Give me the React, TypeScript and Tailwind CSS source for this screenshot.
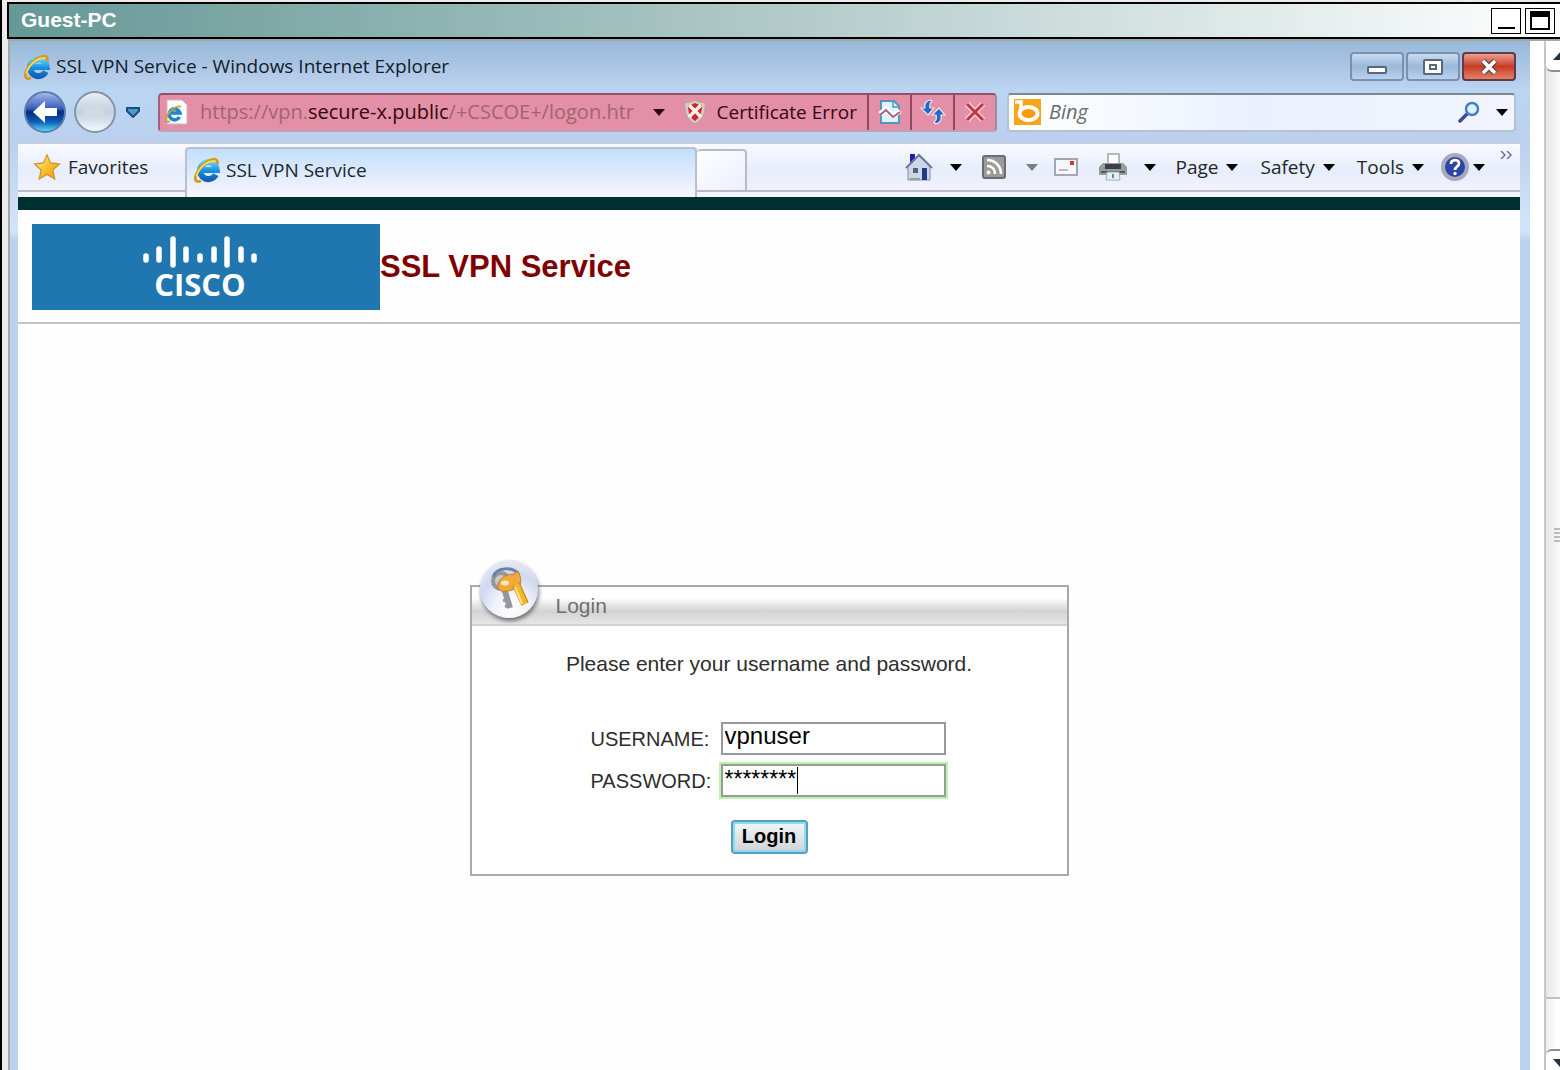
import { useState } from "react";
import type { ReactNode } from "react";

const uiFont = "font-['Open_Sans','Noto_Sans',sans-serif]";
const pageFont = "font-['Liberation_Sans',Arial,sans-serif]";

const IeLogo = ({ className }: { className: string }) => (
  <svg viewBox="0 0 28 28" className={className} aria-hidden="true">
    <defs>
      <linearGradient id="ie-blue" x1="0" y1="0" x2="0" y2="1">
        <stop offset="0" stopColor="#5fd0fb" />
        <stop offset="0.5" stopColor="#1a8fe0" />
        <stop offset="1" stopColor="#1163b4" />
      </linearGradient>
    </defs>
    <path d="M23.5 19a9 9 0 1 1 1-5H9" fill="none" stroke="url(#ie-blue)" strokeWidth="6.500" />
    <path
      d="M25 8c1-4-1-6.500-5-5.500C12 4.500 3 14 1.500 22c-.7 4 2 5.500 6 3.500"
      fill="none"
      stroke="#d79a1c"
      strokeWidth="3"
    />
    <path d="M23 4.500C14 3.500 5 12 2.500 21" fill="none" stroke="#ffe04f" strokeWidth="1.800" />
  </svg>
);

const Caret = ({ className = "text-black" }: { className?: string }) => (
  <svg viewBox="0 0 12 7" className={`h-[7px] w-3 shrink-0 ${className}`} aria-hidden="true">
    <path d="M0 0h12L6 7z" fill="currentColor" />
  </svg>
);

const BackIcon = () => (
  <svg viewBox="0 0 44 44" className="h-11 w-11" aria-hidden="true">
    <defs>
      <linearGradient id="back-fill" x1="0" y1="0" x2="0" y2="1">
        <stop offset="0" stopColor="#a9bcea" />
        <stop offset="0.4" stopColor="#3d62c0" />
        <stop offset="0.5" stopColor="#082a80" />
        <stop offset="0.75" stopColor="#0e60b8" />
        <stop offset="1" stopColor="#5ee4fb" />
      </linearGradient>
    </defs>
    <circle cx="22" cy="22" r="20" fill="url(#back-fill)" stroke="#5f7ca8" strokeWidth="2" />
    <path d="M10 22l12-11v7h12v8H22v7z" fill="#fff" />
  </svg>
);

const ForwardIcon = () => (
  <svg viewBox="0 0 44 44" className="h-11 w-11" aria-hidden="true">
    <defs>
      <linearGradient id="forward-fill" x1="0" y1="0" x2="0" y2="1">
        <stop offset="0" stopColor="#e9eff6" />
        <stop offset="0.5" stopColor="#c3d0de" />
        <stop offset="1" stopColor="#f3f8fc" />
      </linearGradient>
    </defs>
    <circle cx="22" cy="22" r="20" fill="url(#forward-fill)" stroke="#8494a9" strokeWidth="2" />
    <path d="M33 22L22 12v6.500H11v7h11V32z" fill="#d1dbe6" />
  </svg>
);

const PageLogo = () => (
  <svg viewBox="0 0 24 26" className="h-[26px] w-6 shrink-0" aria-hidden="true">
    <path d="M3 1h15l5 5v19H3z" fill="#fbfdfd" stroke="#d9b5ba" />
    <path d="M15.500 18a5.500 5.500 0 1 1 .5-4H6" fill="none" stroke="#1f86cc" strokeWidth="3.500" />
    <path d="M17 8c-4-3-14 6-15 12-.3 3 2 3.500 4 2" fill="none" stroke="#c9a22a" strokeWidth="1.800" />
  </svg>
);

const ShieldError = () => (
  <svg viewBox="0 0 24 26" className="h-[26px] w-6 shrink-0" aria-hidden="true">
    <path d="M2 3c4 1 6 0 10-2 4 2 6 3 10 2 1 10-2 18-10 22C4 21 1 13 2 3z" fill="#d9c9bf" stroke="#b9a39a" />
    <path d="M5 6c3 0 5-1 7-2 2 1 4 2 7 2 0 8-2 12-7 16C7 18 5 14 5 6z" fill="#cf2330" />
    <path d="M6 6l12 12M18 6L6 18" stroke="#fff2e4" strokeWidth="3.500" />
  </svg>
);

const CompatIcon = () => (
  <svg viewBox="0 0 24 26" className="h-[26px] w-6" aria-hidden="true">
    <path d="M3 2h13l5 5v17H3z" fill="#dff4fa" stroke="#5796b8" strokeWidth="2" />
    <path d="M15 2v6h6" fill="none" stroke="#5796b8" strokeWidth="1.500" />
    <path d="M2 15l6-5 7 7 7-5" fill="none" stroke="#fff" strokeWidth="5" />
    <path d="M2 16l6-5 7 7 7-5" fill="none" stroke="#a45c92" strokeWidth="2" />
  </svg>
);

const RefreshIcon = () => (
  <svg viewBox="0 0 26 26" className="h-[26px] w-[26px]" aria-hidden="true">
    <g stroke="#f4dfea" strokeWidth="1.200" fill="#1f6cc8">
      <path d="M10 1C6 2 4 5 5 9H1l7 7 6-7h-4c-1-3 0-5 2-7z" />
      <path d="M16 25c4-1 6-4 5-9h4l-6-7-7 7h4c1 3 1 5-2 7z" />
    </g>
  </svg>
);

const StopIcon = () => (
  <svg viewBox="0 0 24 24" className="h-6 w-6" aria-hidden="true">
    <path d="M4 4l16 16M20 4L4 20" stroke="#f7d5d8" strokeWidth="6" />
    <path d="M4 4l16 16M20 4L4 20" stroke="#c9333d" strokeWidth="3" />
  </svg>
);

const BingIcon = () => (
  <svg viewBox="0 0 27 26" className="h-[26px] w-[27px] shrink-0" aria-hidden="true">
    <rect width="27" height="26" fill="#f9a51a" />
    <path d="M1 3h6v12" fill="none" stroke="#fff" strokeWidth="3.500" />
    <ellipse cx="14.500" cy="14.500" rx="9" ry="6.500" fill="#fb9a07" stroke="#fff" strokeWidth="4" />
  </svg>
);

const SearchIcon = () => (
  <svg viewBox="0 0 22 22" className="h-[22px] w-[22px]" aria-hidden="true">
    <path d="M2 20l8-8" stroke="#3c4a9c" strokeWidth="3.500" strokeLinecap="round" />
    <circle cx="14" cy="8" r="6" fill="#d9f4fd" stroke="#4a7fc0" strokeWidth="2.500" />
  </svg>
);

const StarIcon = () => (
  <svg viewBox="0 0 28 28" className="h-7 w-7 shrink-0" aria-hidden="true">
    <defs>
      <linearGradient id="star-fill" x1="0" y1="0" x2="1" y2="1">
        <stop offset="0" stopColor="#fff7b0" />
        <stop offset="0.5" stopColor="#fbc42c" />
        <stop offset="1" stopColor="#f08c10" />
      </linearGradient>
    </defs>
    <path
      d="M14 2l3.500 8 9 1-6.700 6 2 9L14 21.500 6.200 26l2-9-6.700-6 9-1z"
      fill="url(#star-fill)"
      stroke="#d29334"
      strokeWidth="1.300"
    />
  </svg>
);

const HomeIcon = () => (
  <svg viewBox="0 0 28 28" className="h-7 w-7" aria-hidden="true">
    <path d="M3 13L14 3l11 10v14H3z" fill="#cdd7e8" stroke="#8490ab" />
    <path d="M5 1h5v6l-5 5z" fill="#1d20a8" />
    <path d="M1 15L14 2l13 13" fill="none" stroke="#727a9e" strokeWidth="2" />
    <rect x="8" y="15" width="5" height="5" fill="#56627c" />
    <rect x="17" y="15" width="5" height="12" fill="#1d3a86" />
    <path d="M5 26h10" stroke="#8fa38f" strokeWidth="2" />
  </svg>
);

const FeedIcon = () => (
  <svg viewBox="0 0 24 24" className="h-6 w-6" aria-hidden="true">
    <rect x="1" y="1" width="22" height="22" rx="2" fill="#9b9b9b" stroke="#6c6c6c" strokeWidth="2" />
    <g fill="none" stroke="#fff" strokeWidth="2.500">
      <path d="M5 5c8 0 14 6 14 14" />
      <path d="M5 11c5 0 8 3 8 8" />
    </g>
    <circle cx="6.500" cy="17.500" r="2" fill="#fff" />
  </svg>
);

const MailIcon = () => (
  <svg viewBox="0 0 24 18" className="h-[18px] w-6" aria-hidden="true">
    <rect x="1" y="1" width="22" height="16" fill="#f6f7fa" stroke="#a3a7b0" strokeWidth="2" />
    <rect x="16" y="3" width="4" height="4" fill="#d2353a" />
    <path d="M5 12h9" stroke="#c69c9c" strokeWidth="1.500" />
  </svg>
);

const PrinterIcon = () => (
  <svg viewBox="0 0 28 28" className="h-7 w-7" aria-hidden="true">
    <path d="M9 1h11v10H9z" fill="#fff" stroke="#a4a4a4" strokeWidth="1.500" />
    <path d="M4 10h20l4 4v8H0v-8z" fill="#999c9f" />
    <path d="M6 11h16v5H6z" fill="#3c4045" />
    <path d="M2 19h24" stroke="#55595d" strokeWidth="2" />
    <path d="M8 19h12l1 8H7z" fill="#e9f0f2" stroke="#9caeb3" />
    <path d="M14 21v4" stroke="#3fa2a4" strokeWidth="2" />
  </svg>
);

const HelpIcon = () => (
  <svg viewBox="0 0 28 28" className="h-7 w-7" aria-hidden="true">
    <circle cx="14" cy="14" r="12" fill="#2a47a8" stroke="#a7a9bd" strokeWidth="4" />
    <path d="M10 11c0-5 8-5 8-.5 0 3-4 3-4 6.500" fill="none" stroke="#fff" strokeWidth="2.800" />
    <circle cx="14" cy="20.500" r="1.700" fill="#fff" />
  </svg>
);

const KeysIcon = () => (
  <svg viewBox="0 0 68 68" className="h-[68px] w-[68px]" aria-hidden="true">
    <defs>
      <radialGradient id="disc" cx="0.550" cy="0.850" r="0.800">
        <stop offset="0" stopColor="#ffffff" />
        <stop offset="0.4" stopColor="#f0f2fb" />
        <stop offset="0.75" stopColor="#cfd8ef" />
        <stop offset="1" stopColor="#e4e8f4" />
      </radialGradient>
      <filter id="disc-shadow" x="-20%" y="-20%" width="150%" height="150%">
        <feDropShadow dx="1" dy="3" stdDeviation="2" floodColor="#555" floodOpacity="0.8" />
      </filter>
    </defs>
    <circle cx="31" cy="30" r="29" fill="url(#disc)" filter="url(#disc-shadow)" />
    <g fill="none" stroke="#94979c">
      <ellipse cx="23" cy="22" rx="8" ry="8" strokeWidth="4" fill="#c9cbd0" />
      <path d="M26 29l6 20" strokeWidth="6" />
      <path d="M29 40l-4 2M31 46l-4 2" strokeWidth="3" />
    </g>
    <path d="M15 18c3-10 20-11 26-2" fill="none" stroke="#6f7fa4" strokeWidth="3" />
    <path d="M20 25c2-7 10-10 16-10l4-3c3 6 4 12 1 15-5 5-17 7-19 4-2-2-3-3-2-6z" fill="#f2a83a" stroke="#b9822c" />
    <ellipse cx="27" cy="24" rx="4" ry="2.500" fill="#fbeac0" />
    <path d="M38 25l9 20" fill="none" stroke="#c48a1e" strokeWidth="8" />
    <path d="M38 25l9 20" fill="none" stroke="#f4b52e" strokeWidth="5.500" />
    <path d="M37 28l7 17" stroke="#ffe87a" strokeWidth="2" />
  </svg>
);

const CiscoBars = () => (
  <svg viewBox="0 0 114 32" className="h-8 w-[114px]" aria-hidden="true">
    <g stroke="#fff" strokeWidth="5.500" strokeLinecap="round">
      <path d="M3 20v4M16 13v11M43 13v11M57 20v4M71 13v11M98 13v11M111 20v4" />
      <path d="M30 3v26M84 3v26" />
    </g>
  </svg>
);

const CaptionButton = ({ label, danger, children }: { label: string; danger?: boolean; children: ReactNode }) => (
  <button
    aria-label={label}
    className={`flex h-[29px] w-[54px] items-center justify-center rounded border-2 ${
      danger
        ? "border-[#5d3c4c] bg-linear-to-b from-[#ee9d90] via-[#c53b24] to-[#e58066]"
        : "border-[#7990b0] bg-linear-to-b from-[#c9dcf1] via-[#9bb8d8] to-[#b9d3ee]"
    }`}
  >
    {children}
  </button>
);

const TitleBar = () => (
  <header className="mt-0.5 ml-[5px] flex h-[37px] shrink-0 items-center justify-between border-2 border-r-0 border-black bg-linear-to-r from-[#659896] to-white pr-[5px] pl-3">
    <h1 className={`pb-0.5 text-[21px] leading-6 font-bold text-white ${pageFont}`}>Guest-PC</h1>
    <div className="flex gap-1">
      <button aria-label="Minimize" className="flex h-[26px] w-[30px] items-end justify-center border border-black bg-white pb-1">
        <span className="h-0.5 w-[17px] bg-black" />
      </button>
      <button aria-label="Maximize" className="flex h-[26px] w-[30px] items-center justify-center border border-black bg-white">
        <span className="h-[19px] w-5 border-2 border-t-[6px] border-black" />
      </button>
    </div>
  </header>
);

const WindowCaption = () => (
  <div className="flex h-[51px] items-center justify-between pr-1 pl-1.5">
    <div className="flex items-center gap-1.5 text-[19px] text-[#10202c]">
      <IeLogo className="h-7 w-[26px]" />
      <span>SSL VPN Service - Windows Internet Explorer</span>
    </div>
    <div className="flex gap-0.5">
      <CaptionButton label="Minimize window">
        <span className="mt-1.5 h-2 w-5 rounded-xs border-2 border-[#58677c] bg-white" />
      </CaptionButton>
      <CaptionButton label="Restore window">
        <span className="flex h-4 w-5 items-center justify-center rounded-xs border-2 border-[#58677c] bg-white">
          <span className="h-1.5 w-2 border-2 border-[#58677c]" />
        </span>
      </CaptionButton>
      <CaptionButton label="Close window" danger>
        <svg viewBox="0 0 18 16" className="h-4 w-[18px]" aria-hidden="true">
          <path d="M3 2l12 12M15 2L3 14" stroke="#5b4a55" strokeWidth="6" />
          <path d="M3 2l12 12M15 2L3 14" stroke="#fff" strokeWidth="3.500" />
        </svg>
      </CaptionButton>
    </div>
  </div>
);

const NavigationRow = () => (
  <div className="flex h-10 items-center pr-1 pl-[5px]">
    <button aria-label="Back">
      <BackIcon />
    </button>
    <button aria-label="Forward" className="ml-1.5">
      <ForwardIcon />
    </button>
    <button aria-label="Recent pages" className="ml-2">
      <svg viewBox="0 0 16 11" className="h-[11px] w-4" aria-hidden="true">
        <path d="M2 1h12v3L8 10 2 4z" fill="#4a9cc6" stroke="#1c4c80" strokeWidth="2" />
      </svg>
    </button>

    <div className="ml-[17px] flex h-[39px] w-[839px] shrink-0 items-stretch rounded-sm border-2 border-t-[#94506b] border-r-[#a78a9c] border-b-[#b8a4b8] border-l-[#a4607a] bg-[#e38fa7] text-[19px]">
      <div className="flex flex-1 items-center pl-1">
        <PageLogo />
        <a href="#address" className="ml-3 text-xl whitespace-nowrap text-[#a3646f]">
          https://vpn.<span className="text-[#33070f]">secure-x.public</span>/+CSCOE+/logon.htr
        </a>
        <button aria-label="Address history" className="ml-auto">
          <Caret className="text-[#33070f]" />
        </button>
      </div>
      <a href="#certificate" className="ml-[18px] flex items-center gap-2.5 pr-2.5 whitespace-nowrap text-[#33070f]">
        <ShieldError />
        Certificate Error
      </a>
      <button aria-label="Compatibility view" className="flex w-[43px] items-center justify-center border-l-2 border-[#8d4961]">
        <CompatIcon />
      </button>
      <button aria-label="Refresh" className="flex w-[43px] items-center justify-center border-l-2 border-[#8d4961]">
        <RefreshIcon />
      </button>
      <button aria-label="Stop" className="flex w-[42px] items-center justify-center border-l-2 border-[#8d4961]">
        <StopIcon />
      </button>
    </div>

    <div className="ml-2.5 flex h-[39px] min-w-0 flex-1 items-center rounded-sm border-2 border-[#b5c2d0] border-t-[#7c8794] bg-linear-to-r from-white via-[#eaf1fe] to-[#f2f5fe] pr-1.5 pl-[5px]">
      <BingIcon />
      <input
        aria-label="Search"
        placeholder="Bing"
        className="ml-2 min-w-0 flex-1 bg-transparent text-xl italic outline-none placeholder:text-[#6b6b6b]"
      />
      <button aria-label="Go" className="mr-4">
        <SearchIcon />
      </button>
      <button aria-label="Search options">
        <Caret />
      </button>
    </div>
  </div>
);

const menuItems = ["Page", "Safety", "Tools"];

const TabRow = () => (
  <div className="mt-[11px] flex h-[54px] items-start border-t border-[#c5ccda] bg-linear-to-b from-[#f9faff] via-[#e6edfb] to-[#f4f5fe] text-[19px] text-[#22262b]">
    <button className="flex h-12 w-[167px] shrink-0 items-center gap-[7px] border-b-2 border-[#bcbccb] pl-[15px]">
      <StarIcon />
      Favorites
    </button>
    <button className="mt-[3px] flex h-[50px] w-[512px] shrink-0 items-center gap-1.5 rounded-t border-2 border-b-0 border-[#babfcf] bg-linear-to-b from-[#c2dffd] to-[#f9f5fe] pb-1.5 pl-[7px]">
      <IeLogo className="h-7 w-[26px]" />
      SSL VPN Service
    </button>
    <button aria-label="New tab" className="mt-[5px] h-[43px] w-[50px] shrink-0 rounded-t border-2 border-l-0 border-[#b9bac6] bg-linear-to-br from-white to-[#eceffd]" />
    <div className="flex h-12 min-w-0 flex-1 items-center justify-end border-b-2 border-[#bcbccb] pr-[5px]">
      <button aria-label="Home" className="mr-[17px]">
        <HomeIcon />
      </button>
      <button aria-label="Home options" className="mr-5">
        <Caret />
      </button>
      <button aria-label="Feeds" className="mr-5">
        <FeedIcon />
      </button>
      <button aria-label="Feed options" className="mr-4">
        <Caret className="text-[#7d7f85]" />
      </button>
      <button aria-label="Read mail" className="mr-[21px]">
        <MailIcon />
      </button>
      <button aria-label="Print" className="mr-[17px]">
        <PrinterIcon />
      </button>
      <button aria-label="Print options" className="mr-5">
        <Caret />
      </button>
      {menuItems.map((item) => (
        <button key={item} className="mr-[22px] flex items-center gap-2">
          {item}
          <Caret />
        </button>
      ))}
      <button aria-label="Help" className="-ml-[5px] flex items-center gap-1">
        <HelpIcon />
        <Caret />
      </button>
      <button aria-label="More commands" className="mb-6 ml-3.5">
        <svg viewBox="0 0 16 8" className="h-2 w-4" aria-hidden="true">
          <path d="M1 0l4 4-4 4M7 0l4 4-4 4" transform="translate(1)" fill="none" stroke="#6c6ca2" strokeWidth="1.500" />
        </svg>
      </button>
    </div>
  </div>
);

const LoginPanel = () => {
  const [username, setUsername] = useState("vpnuser");
  const [password, setPassword] = useState("********");

  return (
    <form
      onSubmit={(e) => e.preventDefault()}
      className="relative mx-auto mt-[261px] w-[599px] border-2 border-[#a9a9a9] bg-white text-[#2d2d2d]"
    >
      <div className="absolute -top-7 left-1.5">
        <KeysIcon />
      </div>
      <h3 className="flex h-[39px] items-center border-b-2 border-[#d2d2d2] bg-linear-to-b from-white from-30% via-[#d4d2d4] via-65% to-[#e6e6e6] pl-[84px] text-[21px] text-[#6f6f6f]">
        Login
      </h3>
      <p className="mt-6 text-center text-[21px] leading-7">Please enter your username and password.</p>
      <div className="mt-11 flex items-center pl-[119px] text-xl">
        <label htmlFor="username" className="w-[130px]">
          USERNAME:
        </label>
        <input
          id="username"
          value={username}
          onChange={(e) => setUsername(e.target.value)}
          className="h-[33px] w-[225px] border-2 border-[#999] pb-1.5 pl-0.5 text-2xl leading-6 text-black outline-none"
        />
      </div>
      <div className="mt-[9px] flex items-center pl-[119px] text-xl">
        <label htmlFor="password" className="w-[130px]">
          PASSWORD:
        </label>
        <div className="flex h-[33px] w-[225px] items-center border-2 border-[#999] pl-0.5 ring-2 ring-[#b9f5a4]">
          <input
            id="password"
            value={password}
            onChange={(e) => setPassword(e.target.value)}
            className="w-[72px] pb-1 text-[23px] leading-6 text-black outline-none"
          />
          <span className="h-[27px] w-px bg-black" />
        </div>
      </div>
      <button className="mx-auto mt-[23px] mb-5 block h-[34px] w-[77px] rounded-sm border-2 border-[#559fc0] bg-linear-to-b from-[#f4f6f7] to-[#cfd4d8] pb-0.5 text-xl leading-6 font-bold text-black ring-2 ring-[#8fdcf0] ring-inset">
        Login
      </button>
    </form>
  );
};

const VpnPage = () => (
  <main className={`flex-1 bg-[#fefefe] ${pageFont}`}>
    <div className="h-[13px] bg-[#003030]" />
    <div className="flex items-center border-b-2 border-[#c3c3c3] pt-3.5 pb-3 pl-3.5">
      <div className="flex h-[86px] w-[348px] flex-col items-center bg-[#2077b0] pt-3 pr-3">
        <CiscoBars />
        <span className={`text-[31px] leading-8 font-bold text-white ${uiFont}`}>CISCO</span>
      </div>
      <h2 className="text-[31px] leading-9 font-bold text-[#800000]">SSL VPN Service</h2>
    </div>
    <LoginPanel />
  </main>
);

const OuterScrollbar = () => (
  <aside aria-label="Scrollbar" className="flex w-4 shrink-0 flex-col overflow-hidden border-l-2 border-[#c6c6c6] bg-linear-to-r from-[#e6e6e6] to-[#fbfbfb]">
    <button aria-label="Scroll up" className="flex h-[31px] w-7 shrink-0 items-center rounded-bl-md border-b-2 border-[#8f8f8f] bg-white pl-[7px]">
      <svg viewBox="0 0 16 9" className="h-[9px] w-4" aria-hidden="true">
        <path d="M0 9L8 0l8 9z" fill="#25303b" />
      </svg>
    </button>
    <div className="flex w-7 flex-1 items-center border-b-2 border-[#c0c0c0] pl-2">
      <svg viewBox="0 0 12 14" className="h-3.5 w-3" aria-hidden="true">
        <path d="M0 1h12M0 5h12M0 9h12M0 13h12" stroke="#a8a8a8" strokeWidth="1.500" />
      </svg>
    </div>
    <div className="h-[50px] w-7 shrink-0 bg-linear-to-r from-[#ededed] to-white to-40%" />
    <button aria-label="Scroll down" className="flex h-[21px] w-7 shrink-0 items-center rounded-tl-md border-t-2 border-[#8f8f8f] bg-white pt-1.5 pl-[7px]">
      <svg viewBox="0 0 16 9" className="h-[9px] w-4" aria-hidden="true">
        <path d="M0 0h16L8 9z" fill="#25303b" />
      </svg>
    </button>
  </aside>
);

const App = () => {
  return (
    <div className="flex h-screen flex-col overflow-hidden border-l-2 border-black bg-[#ececec]">
      <TitleBar />
      <div className="ml-1.5 flex min-h-0 flex-1 border-t-2 border-l-2 border-[#a3a9a9] bg-white">
        <div
          className={`flex min-w-0 flex-1 flex-col overflow-hidden bg-[linear-gradient(to_bottom,#98b8d8_0px,#b4cbe9_35px,#b9d6f2_50px,#bcd0ee_100px,#d3e5f8_190px,#bad2ec_200px)] pr-2.5 pl-2 ${uiFont}`}
        >
          <WindowCaption />
          <NavigationRow />
          <TabRow />
          <VpnPage />
        </div>
        <div className="w-3.5 shrink-0" />
        <OuterScrollbar />
      </div>
    </div>
  );
};

export default App;
